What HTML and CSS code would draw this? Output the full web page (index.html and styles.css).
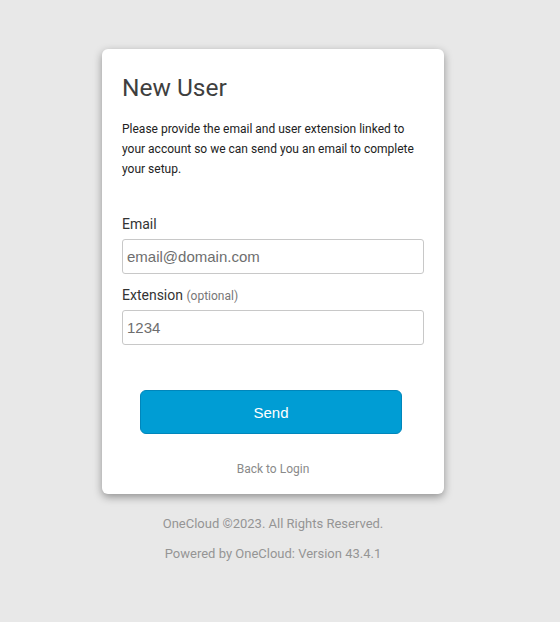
FILE: index.html
```html
<!DOCTYPE html>
<html>
<head>
<meta charset="utf-8">
<link rel="stylesheet" href="styles.css">
</head>
<body>
<div class="wrap">
  <div class="card">
    <h1 class="title">New User</h1>
    <p class="intro">Please provide the email and user extension linked to your account so we can send you an email to complete your setup.</p>
    <div class="field">
      <label class="label">Email</label>
      <input class="input" type="text" placeholder="email@domain.com">
    </div>
    <div class="field">
      <label class="label">Extension <span class="opt">(optional)</span></label>
      <input class="input" type="text" placeholder="1234">
    </div>
    <button class="send">Send</button>
    <a class="back">Back to Login</a>
  </div>
  <div class="footer">
    <div>OneCloud ©2023. All Rights Reserved.</div>
    <div>Powered by OneCloud: Version 43.4.1</div>
  </div>
</div>
</body>
</html>
```
FILE: styles.css
```css
html, body {
  margin: 0;
  padding: 0;
  background: #e8e8e8;
  font-family: Roboto, "Liberation Sans", sans-serif;
}
.wrap {
  width: 342px;
  margin-left: 102px;
  padding-top: 49px;
}
.card {
  background: #fff;
  border-radius: 6px;
  box-shadow: 0 3px 8px rgba(0,0,0,0.38);
  padding: 24px 20px 17px 20px;
  display: flex;
  flex-direction: column;
}
.title {
  margin: 0;
  font-size: 24.5px;
  font-weight: 400;
  color: #3f3f3f;
  line-height: 30px;
}
.intro {
  margin: 16px 0 0 0;
  font-size: 12px;
  line-height: 20px;
  color: #222;
}
.field {
  display: flex;
  flex-direction: column;
}
.intro + .field {
  margin-top: 35px;
}
.field + .field {
  margin-top: 11px;
}
.label {
  font-size: 14px;
  color: #333;
  line-height: 20px;
  height: 20px;
  margin-bottom: 5px;
}
.opt {
  font-size: 12px;
  color: #777;
  line-height: 12px;
}
.input {
  box-sizing: border-box;
  width: 302px;
  height: 35px;
  border: 1px solid #c8c8c8;
  border-radius: 3px;
  padding: 0 4px;
  font-family: "Liberation Sans", Arial, sans-serif;
  font-size: 15px;
  color: #333;
  outline: none;
}
.input::placeholder {
  color: #6e6e6e;
}
.send {
  align-self: flex-start;
  margin-left: 18px;
  margin-top: 45px;
  width: 262px;
  height: 44px;
  border: 1px solid #0086bb;
  border-radius: 6px;
  background: #009dd4;
  color: #fff;
  font-family: "Liberation Sans", Arial, sans-serif;
  font-size: 15px;
}
.back {
  align-self: center;
  margin-top: 27px;
  font-size: 12px;
  color: #8a8a8a;
  line-height: 16px;
}
.footer {
  margin-top: 15px;
  text-align: center;
  font-size: 13px;
  color: #959595;
  line-height: 30px;
}
```
